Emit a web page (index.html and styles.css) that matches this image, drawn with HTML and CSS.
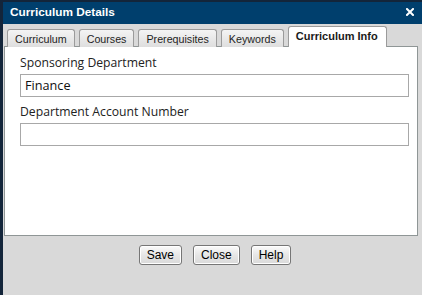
FILE: index.html
```html
<!DOCTYPE html>
<html>
<head>
<meta charset="utf-8">
<link rel="stylesheet" href="styles.css">
</head>
<body>
<div class="dialog">
  <div class="titlebar">
    <span class="title">Curriculum Details</span>
    <svg class="close" width="8" height="8" viewBox="0 0 8 8"><path d="M1 1L7 7M7 1L1 7" stroke="#fff" stroke-width="2" stroke-linecap="square"/></svg>
  </div>
  <div class="body">
    <div class="tabs">
      <div class="tab">Curriculum</div>
      <div class="tab">Courses</div>
      <div class="tab">Prerequisites</div>
      <div class="tab">Keywords</div>
      <div class="tab active">Curriculum Info</div>
    </div>
    <div class="panel">
      <div class="label">Sponsoring Department</div>
      <div class="input">Finance</div>
      <div class="label second">Department Account Number</div>
      <div class="input"></div>
    </div>
    <div class="buttons">
      <button class="btn">Save</button>
      <button class="btn">Close</button>
      <button class="btn">Help</button>
    </div>
  </div>
</div>
</body>
</html>
```
FILE: styles.css
```css
html, body {
  margin: 0;
  padding: 0;
  height: 100%;
}
body {
  background: #13253a;
  overflow: hidden;
}
.dialog {
  margin: 2px 0 0 3px;
  height: 293px;
  background: #d9d9d9;
  display: flex;
  flex-direction: column;
}
.titlebar {
  height: 22px;
  background: #003f6d;
  display: flex;
  align-items: center;
  justify-content: space-between;
  padding: 0 7px;
}
.title {
  font-family: "Liberation Sans", Arial, sans-serif;
  font-weight: bold;
  font-size: 11.8px;
  color: #fff;
  position: relative;
  top: -1px;
}
.close {
  display: block;
  margin-right: 1px;
  position: relative;
  top: -1px;
}
.body {
  display: flex;
  flex-direction: column;
  padding: 0 4px 0 1px;
}
.tabs {
  display: flex;
  align-items: flex-end;
  gap: 4px;
  padding-left: 3px;
  height: 23px;
  margin-bottom: -1px;
  position: relative;
  z-index: 1;
}
.tab {
  font-family: "Liberation Sans", Arial, sans-serif;
  font-size: 10.7px;
  color: #1e1e1e;
  height: 18px;
  line-height: 18px;
  padding: 0 7px;
  border: 1px solid #9b9b9b;
  border-bottom: none;
  border-radius: 3px 3px 0 0;
  background: linear-gradient(#f4f4f4, #dedede);
  box-sizing: border-box;
}
.tab.active {
  height: 21px;
  line-height: 19px;
  background: #fff;
  font-weight: bold;
  font-size: 11px;
  color: #1a1a1a;
  padding: 0 8px 0 7px;
}
.panel {
  height: 190px;
  box-sizing: border-box;
  background: #fff;
  border: 1px solid #8f9696;
  padding: 8px 8px 0 15px;
}
.label {
  font-family: "Open Sans", sans-serif;
  font-size: 12.2px;
  line-height: 16px;
  color: #222;
}
.label.second {
  margin-top: 7px;
}
.input {
  margin-top: 3px;
  height: 23px;
  box-sizing: border-box;
  border: 1px solid #a8a8a8;
  padding: 0 4px;
  font-family: "Open Sans", sans-serif;
  font-size: 12.7px;
  line-height: 21px;
  color: #111;
}
.buttons {
  display: flex;
  justify-content: center;
  gap: 11px;
  padding: 9px 0 0 8px;
}
.btn {
  font-family: "Liberation Sans", Arial, sans-serif;
  font-size: 12px;
  color: #000;
  height: 20px;
  padding: 0 7px;
  margin: 0;
  border: 1px solid #767676;
  border-radius: 3px;
  background: linear-gradient(#fbfbfb, #e6e6e6 50%, #dadada);
  box-shadow: inset 0 0 0 1px #fff;
}
```
